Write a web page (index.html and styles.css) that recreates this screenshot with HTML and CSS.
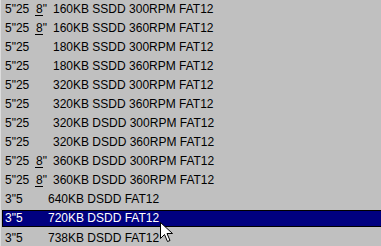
FILE: index.html
```html
<!DOCTYPE html>
<html lang="en">

<head>
    <meta charset="UTF-8">
    <meta name="viewport" content="width=device-width, initial-scale=1.0">
    <title>Disk formats</title>
    <link rel="stylesheet" href="styles.css">
</head>

<body>
    <ul class="formats">
        <li class="row"><span class="drive">5"25 &nbsp;<u>8</u>"</span>160KB SSDD 300RPM FAT12</li>
        <li class="row"><span class="drive">5"25 &nbsp;<u>8</u>"</span>160KB SSDD 360RPM FAT12</li>
        <li class="row"><span class="drive">5"25</span>180KB SSDD 300RPM FAT12</li>
        <li class="row"><span class="drive">5"25</span>180KB SSDD 360RPM FAT12</li>
        <li class="row"><span class="drive">5"25</span>320KB SSDD 300RPM FAT12</li>
        <li class="row"><span class="drive">5"25</span>320KB SSDD 360RPM FAT12</li>
        <li class="row"><span class="drive">5"25</span>320KB DSDD 300RPM FAT12</li>
        <li class="row"><span class="drive">5"25</span>320KB DSDD 360RPM FAT12</li>
        <li class="row"><span class="drive">5"25 &nbsp;<u>8</u>"</span>360KB DSDD 300RPM FAT12</li>
        <li class="row"><span class="drive">5"25 &nbsp;<u>8</u>"</span>360KB DSDD 360RPM FAT12</li>
        <li class="row small"><span class="drive">3"5</span>640KB DSDD FAT12</li>
        <li class="row small selected"><div class="hilite"><span class="drive">3"5</span>720KB DSDD FAT12</div></li>
        <li class="row small"><span class="drive">3"5</span>738KB DSDD FAT12</li>
    </ul>

    <!-- mouse pointer -->
    <svg class="cursor" width="13" height="21" viewBox="0 0 13 21">
        <path d="M0.5 0.5 L0.5 16.5 L4.5 12.5 L7.5 19.5 L10 18.5 L7 11.5 L12.5 11.5 Z" fill="#fff" stroke="#000" stroke-width="1" stroke-linejoin="miter" />
    </svg>
</body>

</html>
```

FILE: styles.css
```css
* {
    margin: 0;
    padding: 0;
    box-sizing: border-box;
}

html {
    height: 100%;
}

body {
    position: relative;
    height: 100%;
    overflow: hidden;
    background-color: #c0c0c0;
    font-family: "Liberation Sans", Arial, sans-serif;
    font-size: 12px;
    color: #000;
}

.formats {
    list-style: none;
    border-top: 1px solid #dcdcdc;
    border-left: 1px solid #dcdcdc;
    margin-top: -1px;
}

.row {
    height: 19px;
    line-height: 19px;
    padding-left: 4px;
    white-space: nowrap;
}

.drive {
    display: inline-block;
    width: 48px;
}

.row.small .drive {
    width: 43px;
}

.row u {
    text-decoration: none;
    border-bottom: 1px solid currentColor;
    padding-left: 1px;
    margin-left: -1px;
    line-height: 11px;
    display: inline-block;
}

/* selected item */
.row.selected {
    padding-left: 1px;
}

.hilite {
    height: 17px;
    line-height: 15px;
    margin-top: 1px;
    padding-left: 2px;
    border: 1px solid #000;
    border-right: 0;
    background-color: #000080;
    color: #fff;
}

.cursor {
    position: absolute;
    left: 160px;
    top: 222px;
}
```
